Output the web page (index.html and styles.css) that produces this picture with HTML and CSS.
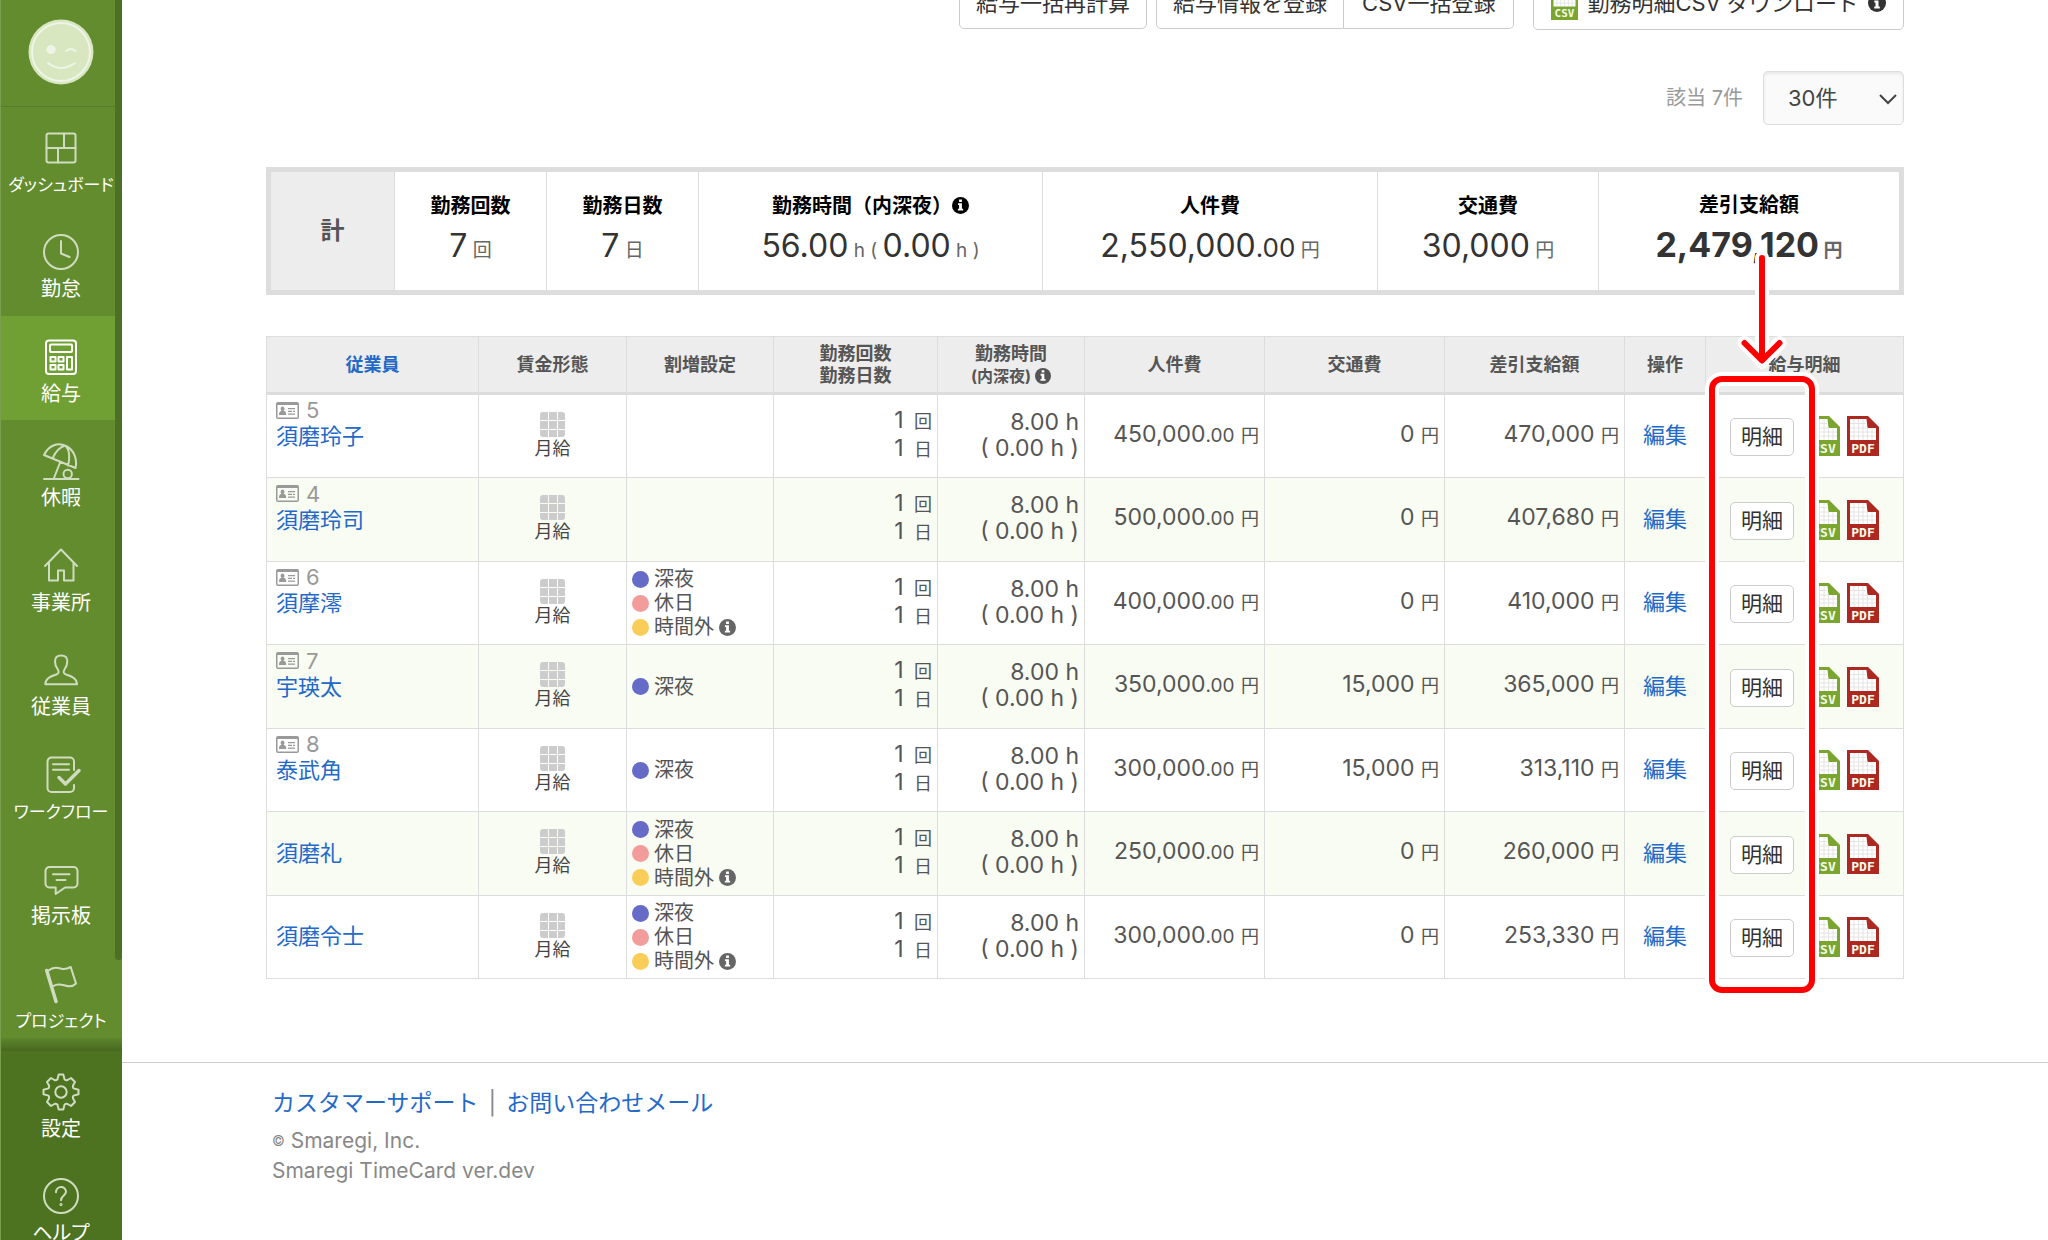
FILE: index.html
```html
<!DOCTYPE html>
<html lang="ja">
<head>
<meta charset="utf-8">
<title>給与 | Smaregi TimeCard</title>
<link rel="stylesheet" href="styles.css">
</head>
<body>
<svg class="sprite" aria-hidden="true">
  <symbol id="info" viewBox="0 0 18 18"><circle cx="9" cy="9" r="9" fill="currentColor"/><path d="M7.5 2.6h3v2.6h-3zM6.3 6.6h4.2v5.8h1.3v2H6.2v-2h1.3V8.6H6.3z" fill="#fff"/></symbol>
  <symbol id="card" viewBox="0 0 23 17"><path d="M2 0h19a2 2 0 0 1 2 2v13a2 2 0 0 1-2 2H2a2 2 0 0 1-2-2V2a2 2 0 0 1 2-2zM1.500 3v12.500h20V3z" fill="currentColor" fill-rule="evenodd"/><path d="M6.500 4.500a2 2.300 0 0 1 1 4.300c2 .5 2.700 1.500 2.700 4.200H3c0-2.700.7-3.700 2.600-4.200a2 2.300 0 0 1 .9-4.300zM12 6h7v1.300h-7zM12 8.700h4V10h-4zM17 8.700h2V10h-2zM12 11.500h7v1.300h-7z" fill="currentColor"/></symbol>
  <symbol id="monthly" viewBox="0 0 25 25"><path d="M3 0h5v8H0V3a3 3 0 0 1 3-3zM9 0h8v8H9zM18 0h4a3 3 0 0 1 3 3v5h-7zM0 9h8v8H0zM9 9h8v8H9zM18 9h7v8h-7zM0 18h8v7H3a3 3 0 0 1-3-3zM9 18h8v7H9zM18 18h7v4a3 3 0 0 1-3 3h-4z" fill="#ccc"/></symbol>
  <symbol id="sheet" viewBox="0 0 32 40"><path d="M0 0h21l11 11v29H0z" fill="currentColor"/><path d="M3 3h16.500l1 9H29v12H3z" fill="#fff"/><path d="M7 3v21M11.500 3v21M16 3v21M20.500 12v12M25 12v12M3 7.500h16M3 12h18M3 16h26M3 20h26" stroke="#e4e4e4" fill="none"/></symbol>
  <symbol id="csv" viewBox="0 0 32 40"><use href="#sheet" width="32" height="40"/><text x="16" y="37" class="file-label">CSV</text></symbol>
  <symbol id="pdf" viewBox="0 0 32 40"><use href="#sheet" width="32" height="40"/><text x="16" y="37" class="file-label">PDF</text></symbol>
</svg>

<aside class="sidebar">
  <a class="avatar" href="#" aria-label="プロフィール">
    <svg viewBox="0 0 66 66" width="66" height="66"><circle cx="33" cy="33" r="32.500" fill="#d9e7c0"/><g fill="none" stroke="#eff4e8" stroke-width="2" stroke-linecap="round"><circle cx="33" cy="33" r="29"/><path d="M38 32q5-4 9.500 0M20 44q13 10 27 0"/></g><circle cx="23" cy="30.500" r="4.600" fill="#eff4e8"/></svg>
  </a>
  <nav class="menu">
    <a class="item kana" href="#"><svg viewBox="0 0 36 36"><rect x="3.500" y="3.500" width="29" height="29" rx="2"/><path d="M3.500 18h29M21 3.500V18M15 18v14.500"/></svg><span>ダッシュボード</span></a>
    <a class="item" href="#"><svg viewBox="0 0 36 36"><circle cx="18" cy="18" r="17"/><path d="M18 7v12.500l8.500 3.500"/></svg><span>勤怠</span></a>
    <a class="item active" href="#"><svg viewBox="0 0 36 36"><rect x="3" y="1.500" width="30" height="33.500" rx="3"/><rect x="7" y="5.500" width="22" height="7.500" rx="1"/><path d="M7.500 18h5v4.500h-5zM15.500 18h5v4.500h-5zM7.500 26h5v4.500h-5zM15.500 26h5v4.500h-5zM24 18h5v12.500h-5z"/></svg><span>給与</span></a>
    <a class="item" href="#"><svg viewBox="0 0 36 36"><path d="M1 12C6 2 15-1 23 3c8 4 11.500 13 9.500 22zM22 2.500c-6 2-10 7-12.500 13M22 2.500c5 4 5 13 3 20M17.300 19 11 35M1 36h34.500"/><circle cx="24.700" cy="31" r="4.200"/></svg><span>休暇</span></a>
    <a class="item" href="#"><svg viewBox="0 0 36 36"><path d="M2 18 18 1.500 34 18M6 14v18.500h9V22.500h6v10h9.500V14"/></svg><span>事業所</span></a>
    <a class="item" href="#"><svg viewBox="0 0 36 36"><path d="M18 3.500c4.500 0 6.500 2 6.300 6 0 4-.8 5.500-2.800 8-1.500 2.500-1 4 1.500 5 4 1.500 11 3 11 9.800H2.300c0-6.800 7-8.300 11-9.800 2.500-1 3-2.500 1.500-5-2-2.500-2.800-4-2.800-8 0-4 1.500-6 6-6z"/></svg><span>従業員</span></a>
    <a class="item kana" href="#"><svg viewBox="0 0 36 36"><path d="M31 13V4.500a4 4 0 0 0-4-4H8.500a4 4 0 0 0-4 4V31a4 4 0 0 0 4 4H27a4 4 0 0 0 4-4v-3M10 7.300h16M10 12.700h16"/><path d="m16 20.500 6.500 6.500L36 13.500" stroke-width="3.500"/></svg><span>ワークフロー</span></a>
    <a class="item" href="#"><svg viewBox="0 0 36 36"><path d="M6.500 6h24a4 4 0 0 1 4 4v12.500a4 4 0 0 1-4 4H22L12.700 33v-6.500H6.500a4 4 0 0 1-4-4V10a4 4 0 0 1 4-4zM10 13.300h16.500M13.500 19h9"/></svg><span>掲示板</span></a>
    <a class="item kana" href="#"><svg viewBox="0 0 36 36"><path d="M3.700 4.500 13 35.500" stroke-width="3.500"/><path d="M5.500 4.500c5-4 9-3 13-1.800 4 1 6 0 9.200-1.700l5.300 16.500c-3 3-6 3.500-10 2.300-4-1-8-3-12.500.2"/></svg><span>プロジェクト</span></a>
  </nav>
  <nav class="menu menu-sub">
    <a class="item" href="#"><svg viewBox="-18 -18 36 36"><path d="M-3.600-12.500-2.300-17.500H2.300L3.600-12.500Q5-11.500 6.600-12L10-14 14-10 12-6.600Q11.500-5 12.500-3.600L17.500-2.300V2.300L12.500 3.600Q11.500 5 12 6.600L14 10 10 14 6.600 12Q5 11.500 3.600 12.500L2.300 17.500H-2.300L-3.600 12.500Q-5 11.500-6.600 12L-10 14-14 10-12 6.600Q-11.500 5-12.500 3.600L-17.500 2.300V-2.300L-12.500-3.600Q-11.500-5-12-6.600L-14-10-10-14-6.600-12Q-5-11.500-3.600-12.500z"/><circle r="5.700"/></svg><span>設定</span></a>
    <a class="item" href="#"><svg viewBox="0 0 36 36"><circle cx="18" cy="18" r="17"/><path d="M13 14.300c0-7 10-7 10-.5 0 3.500-5 4-5 8.500"/><circle cx="18" cy="26.500" r=".6"/></svg><span>ヘルプ</span></a>
  </nav>
  <div class="scroll-thumb"></div>
</aside>

<div class="page">
  <main class="content">
    <div class="toolbar">
      <button class="btn" type="button">給与一括再計算</button>
      <div class="btn-group"><button class="btn" type="button">給与情報を登録</button><button class="btn" type="button">CSV一括登録</button></div>
      <button class="btn btn-download" type="button"><svg class="csv" viewBox="0 0 32 40" width="27" height="34"><use href="#csv"/></svg>勤務明細CSV ダウンロード<svg width="18" height="18"><use href="#info"/></svg></button>
    </div>

    <div class="pager">
      <label for="per-page">該当 7件</label>
      <div class="select"><select id="per-page"><option>30件</option></select><svg viewBox="0 0 18 10" width="18" height="10"><path d="m1 1 8 8 8-8" fill="none" stroke="#444" stroke-width="2"/></svg></div>
    </div>

    <table class="summary">
      <colgroup><col class="s-head"><col class="s-count"><col class="s-count"><col class="s-time"><col class="s-cost"><col class="s-fare"><col class="s-net"></colgroup>
      <tr>
        <th scope="row">計</th>
        <td><h2>勤務回数</h2><p><b>7</b> 回</p></td>
        <td><h2>勤務日数</h2><p><b>7</b> 日</p></td>
        <td><h2>勤務時間（内深夜）<svg width="17" height="17"><use href="#info"/></svg></h2><p><b>56.00</b> h ( <b>0.00</b> h )</p></td>
        <td><h2>人件費</h2><p><b>2,550,000<small>.00</small></b> 円</p></td>
        <td><h2>交通費</h2><p><b>30,000</b> 円</p></td>
        <td class="net"><h2>差引支給額</h2><p><b>2,479,120</b> 円</p></td>
      </tr>
    </table>

    <div class="payroll-wrap">
      <table class="payroll">
        <colgroup><col class="c-name"><col class="c-type"><col class="c-prem"><col class="c-count"><col class="c-time"><col class="c-money"><col class="c-money"><col class="c-money"><col class="c-op"><col class="c-slip"></colgroup>
        <thead>
          <tr><th><a href="#">従業員</a></th><th>賃金形態</th><th>割増設定</th><th>勤務回数<br>勤務日数</th><th>勤務時間<br><small>(内深夜) <svg width="16" height="16"><use href="#info"/></svg></small></th><th>人件費</th><th>交通費</th><th>差引支給額</th><th>操作</th><th>給与明細</th></tr>
        </thead>
        <tbody>
          <tr>
            <td class="name with-id"><span class="id"><svg width="23" height="17"><use href="#card"/></svg>5</span><a href="#">須磨玲子</a></td>
            <td class="type"><svg width="25" height="25"><use href="#monthly"/></svg>月給</td>
            <td></td>
            <td class="num count">1 <i>回</i><br>1 <i>日</i></td>
            <td class="num">8.00 h<br>( 0.00 h )</td>
            <td class="num">450,000<small>.00</small> <i>円</i></td>
            <td class="num">0 <i>円</i></td>
            <td class="num">470,000 <i>円</i></td>
            <td class="op"><a href="#">編集</a></td>
            <td><div class="slip"><button class="btn-slip" type="button">明細</button><a class="csv" href="#" aria-label="CSV"><svg width="32" height="40"><use href="#csv"/></svg></a><a class="pdf" href="#" aria-label="PDF"><svg width="32" height="40"><use href="#pdf"/></svg></a></div></td>
          </tr>
          <tr>
            <td class="name with-id"><span class="id"><svg width="23" height="17"><use href="#card"/></svg>4</span><a href="#">須磨玲司</a></td>
            <td class="type"><svg width="25" height="25"><use href="#monthly"/></svg>月給</td>
            <td></td>
            <td class="num count">1 <i>回</i><br>1 <i>日</i></td>
            <td class="num">8.00 h<br>( 0.00 h )</td>
            <td class="num">500,000<small>.00</small> <i>円</i></td>
            <td class="num">0 <i>円</i></td>
            <td class="num">407,680 <i>円</i></td>
            <td class="op"><a href="#">編集</a></td>
            <td><div class="slip"><button class="btn-slip" type="button">明細</button><a class="csv" href="#" aria-label="CSV"><svg width="32" height="40"><use href="#csv"/></svg></a><a class="pdf" href="#" aria-label="PDF"><svg width="32" height="40"><use href="#pdf"/></svg></a></div></td>
          </tr>
          <tr>
            <td class="name with-id"><span class="id"><svg width="23" height="17"><use href="#card"/></svg>6</span><a href="#">須摩澪</a></td>
            <td class="type"><svg width="25" height="25"><use href="#monthly"/></svg>月給</td>
            <td><ul class="prem"><li class="night">深夜</li><li class="holiday">休日</li><li class="over">時間外<svg width="17" height="17"><use href="#info"/></svg></li></ul></td>
            <td class="num count">1 <i>回</i><br>1 <i>日</i></td>
            <td class="num">8.00 h<br>( 0.00 h )</td>
            <td class="num">400,000<small>.00</small> <i>円</i></td>
            <td class="num">0 <i>円</i></td>
            <td class="num">410,000 <i>円</i></td>
            <td class="op"><a href="#">編集</a></td>
            <td><div class="slip"><button class="btn-slip" type="button">明細</button><a class="csv" href="#" aria-label="CSV"><svg width="32" height="40"><use href="#csv"/></svg></a><a class="pdf" href="#" aria-label="PDF"><svg width="32" height="40"><use href="#pdf"/></svg></a></div></td>
          </tr>
          <tr>
            <td class="name with-id"><span class="id"><svg width="23" height="17"><use href="#card"/></svg>7</span><a href="#">宇瑛太</a></td>
            <td class="type"><svg width="25" height="25"><use href="#monthly"/></svg>月給</td>
            <td><ul class="prem"><li class="night">深夜</li></ul></td>
            <td class="num count">1 <i>回</i><br>1 <i>日</i></td>
            <td class="num">8.00 h<br>( 0.00 h )</td>
            <td class="num">350,000<small>.00</small> <i>円</i></td>
            <td class="num">15,000 <i>円</i></td>
            <td class="num">365,000 <i>円</i></td>
            <td class="op"><a href="#">編集</a></td>
            <td><div class="slip"><button class="btn-slip" type="button">明細</button><a class="csv" href="#" aria-label="CSV"><svg width="32" height="40"><use href="#csv"/></svg></a><a class="pdf" href="#" aria-label="PDF"><svg width="32" height="40"><use href="#pdf"/></svg></a></div></td>
          </tr>
          <tr>
            <td class="name with-id"><span class="id"><svg width="23" height="17"><use href="#card"/></svg>8</span><a href="#">泰武角</a></td>
            <td class="type"><svg width="25" height="25"><use href="#monthly"/></svg>月給</td>
            <td><ul class="prem"><li class="night">深夜</li></ul></td>
            <td class="num count">1 <i>回</i><br>1 <i>日</i></td>
            <td class="num">8.00 h<br>( 0.00 h )</td>
            <td class="num">300,000<small>.00</small> <i>円</i></td>
            <td class="num">15,000 <i>円</i></td>
            <td class="num">313,110 <i>円</i></td>
            <td class="op"><a href="#">編集</a></td>
            <td><div class="slip"><button class="btn-slip" type="button">明細</button><a class="csv" href="#" aria-label="CSV"><svg width="32" height="40"><use href="#csv"/></svg></a><a class="pdf" href="#" aria-label="PDF"><svg width="32" height="40"><use href="#pdf"/></svg></a></div></td>
          </tr>
          <tr>
            <td class="name"><a href="#">須磨礼</a></td>
            <td class="type"><svg width="25" height="25"><use href="#monthly"/></svg>月給</td>
            <td><ul class="prem"><li class="night">深夜</li><li class="holiday">休日</li><li class="over">時間外<svg width="17" height="17"><use href="#info"/></svg></li></ul></td>
            <td class="num count">1 <i>回</i><br>1 <i>日</i></td>
            <td class="num">8.00 h<br>( 0.00 h )</td>
            <td class="num">250,000<small>.00</small> <i>円</i></td>
            <td class="num">0 <i>円</i></td>
            <td class="num">260,000 <i>円</i></td>
            <td class="op"><a href="#">編集</a></td>
            <td><div class="slip"><button class="btn-slip" type="button">明細</button><a class="csv" href="#" aria-label="CSV"><svg width="32" height="40"><use href="#csv"/></svg></a><a class="pdf" href="#" aria-label="PDF"><svg width="32" height="40"><use href="#pdf"/></svg></a></div></td>
          </tr>
          <tr>
            <td class="name"><a href="#">須磨令士</a></td>
            <td class="type"><svg width="25" height="25"><use href="#monthly"/></svg>月給</td>
            <td><ul class="prem"><li class="night">深夜</li><li class="holiday">休日</li><li class="over">時間外<svg width="17" height="17"><use href="#info"/></svg></li></ul></td>
            <td class="num count">1 <i>回</i><br>1 <i>日</i></td>
            <td class="num">8.00 h<br>( 0.00 h )</td>
            <td class="num">300,000<small>.00</small> <i>円</i></td>
            <td class="num">0 <i>円</i></td>
            <td class="num">253,330 <i>円</i></td>
            <td class="op"><a href="#">編集</a></td>
            <td><div class="slip"><button class="btn-slip" type="button">明細</button><a class="csv" href="#" aria-label="CSV"><svg width="32" height="40"><use href="#csv"/></svg></a><a class="pdf" href="#" aria-label="PDF"><svg width="32" height="40"><use href="#pdf"/></svg></a></div></td>
          </tr>
        </tbody>
      </table>
      <!-- callout: arrow and frame round the slip buttons -->
      <svg class="callout" viewBox="0 0 114 748" width="114" height="748" aria-hidden="true">
        <g fill="none" stroke-linecap="round" stroke-linejoin="round">
          <g stroke="#fff" stroke-width="14"><rect x="7" y="129" width="100" height="611" rx="10"/><path d="M57 8v104M39.500 93 57 110.500 74.500 93"/></g>
          <g stroke="#f00" stroke-width="6"><rect x="7" y="129" width="100" height="611" rx="10"/><path d="M57 8v102M39.500 93 57 110.500 74.500 93"/></g>
        </g>
      </svg>
    </div>
  </main>

  <footer class="footer">
    <p class="links"><a href="#">カスタマーサポート</a><span>|</span><a href="#">お問い合わせメール</a></p>
    <p><small>©</small> Smaregi, Inc.</p>
    <p>Smaregi TimeCard ver.dev</p>
  </footer>
</div>
</body>
</html>
```
FILE: styles.css
```css
* { box-sizing: border-box; }

body {
  margin: 0;
  height: 100vh;
  overflow: hidden;
  background: #fff;
  color: #555;
  font: 22px/26px Inter, "Noto Sans CJK JP", sans-serif;
}

h2, p, ul { margin: 0; padding: 0; }
i { font-style: normal; }
a { color: #2369c8; text-decoration: none; }
button, select { font: inherit; }
svg { overflow: visible; }

.sprite { position: absolute; width: 0; height: 0; }
.file-label {
  fill: #f4fbe9;
  font: bold 13px "DejaVu Sans Mono", monospace;
  text-anchor: middle;
}
.csv { color: #7aa52f; }
.pdf { color: #ad2820; }

/* sidebar */
.sidebar {
  position: fixed;
  top: 0;
  bottom: 0;
  left: 0;
  width: 122px;
  overflow: hidden;
  background: #638c2e;
  border-left: 1px solid #7b9e4e;
}
.avatar {
  display: flex;
  height: 107px;
  padding: 19px 0 0 27px;
  border-bottom: 1px solid #547c2b;
}
.menu {
  position: relative;
  padding-bottom: 4px;
}
.menu::after {
  content: "";
  position: absolute;
  inset: auto 0 0;
  height: 13px;
  background: linear-gradient(#5d862d, #47681f);
}
.item {
  display: flex;
  flex-direction: column;
  align-items: center;
  gap: 7px;
  height: 104px;
  padding: 23px 1px 0 0;
  color: #fff;
  font-size: 20px;
  line-height: 24px;
  font-feature-settings: "palt";
  white-space: nowrap;
}
.item.kana { font-size: 17px; }
.item:nth-child(even) { height: 105px; }
.item svg {
  width: 36px;
  height: 36px;
  fill: none;
  stroke: #d0dcc0;
  stroke-width: 2;
  stroke-linecap: round;
  stroke-linejoin: round;
}
.item.active { background: #70a033; }
.item.active svg { stroke: #fff; }
.menu-sub { background: #4d7321; }
.menu-sub::after { display: none; }
.scroll-thumb {
  position: absolute;
  top: 0;
  right: 0;
  width: 7px;
  height: 960px;
  border-radius: 0 0 4px 4px;
  background: #4c7026;
}

/* page */
.page {
  margin-top: -24px;
  padding-left: 122px;
}
.content { padding: 0 144px 83px; }

.toolbar {
  display: flex;
  justify-content: flex-end;
  align-items: center;
  height: 54px;
}
.btn {
  height: 52px;
  padding: 0 16px;
  border: 1px solid #ccc;
  border-radius: 5px;
  background: #fff;
  color: #333;
  white-space: nowrap;
}
.btn-group {
  display: flex;
  margin: 0 19px 0 9px;
}
.btn-group .btn:first-child { border-radius: 5px 0 0 5px; }
.btn-group .btn:last-child {
  padding: 0 18px;
  border-left: 0;
  border-radius: 0 5px 5px 0;
}
.btn-download {
  display: flex;
  align-items: center;
  gap: 9px;
  height: 54px;
  padding: 0 17px;
}

.pager {
  display: flex;
  justify-content: flex-end;
  align-items: center;
  gap: 20px;
  margin: 41px 0 42px;
  color: #999;
  font-size: 20px;
}
.select { position: relative; }
.select select {
  appearance: none;
  display: block;
  width: 141px;
  height: 54px;
  padding: 0 24px;
  border: 1px solid #ddd;
  border-radius: 5px;
  background: #fafafa;
  box-shadow: inset 0 2px 3px #e8e8e8;
  color: #444;
  font-size: 22px;
}
.select svg {
  position: absolute;
  top: 23px;
  right: 7px;
  pointer-events: none;
}

table {
  width: 100%;
  table-layout: fixed;
  border-spacing: 0;
}
th, td { padding: 0; }

/* totals */
.summary {
  margin-bottom: 41px;
  border: 5px solid #ddd;
  color: #666;
}
.s-head { width: 124px; }
.s-count { width: 152px; }
.s-time { width: 344px; }
.s-cost { width: 335px; }
.s-fare { width: 221px; }
.s-net { width: 300px; }
.summary th, .summary td {
  height: 118px;
  border-right: 1px solid #ddd;
  text-align: center;
}
.summary td { padding-top: 4px; }
.summary td:last-child { border-right: 0; }
.summary th {
  background: #ededed;
  color: #555;
  font-size: 24px;
}
.summary h2 {
  display: flex;
  justify-content: center;
  align-items: center;
  color: #000;
  font-size: 20px;
  line-height: 30px;
}
.summary p { font-size: 19px; line-height: 50px; word-spacing: normal; }
.summary b { color: #333; font-size: 32px; font-weight: 400; }
.summary small { font-size: 26px; }
.net p, .net b { font-weight: 700; }
.summary .net b { font-size: 34px; }

/* payroll list */
.payroll-wrap { position: relative; }
.payroll {
  border: solid #ddd;
  border-width: 1px 0 0 1px;
}
.c-name { width: 212px; }
.c-type { width: 148px; }
.c-prem { width: 147px; }
.c-count { width: 164px; }
.c-time { width: 147px; }
.c-money { width: 180px; }
.c-op { width: 81px; }
.c-slip { width: 198px; }
.payroll th, .payroll td {
  border: solid #ddd;
  border-width: 0 1px 1px 0;
}
.payroll th {
  height: 58px;
  border-bottom-width: 3px;
  background: #ededed;
  font-size: 18px;
  line-height: 22px;
}
.payroll th small { font-size: 16px; }
.payroll th svg { vertical-align: -2px; }
.payroll td { height: 83px; }
.payroll tbody tr:nth-child(even) { background: #f9fcf2; }
.payroll tbody tr:nth-child(even) td { height: 84px; }
.payroll .name { padding: 0 0 2px 9px; }
.payroll .with-id { padding-bottom: 26px; }
.id {
  display: flex;
  align-items: center;
  gap: 7px;
  color: #999;
}
.id + a { display: block; }
.type {
  color: #444;
  font-size: 18px;
  line-height: 24px;
  text-align: center;
}
.type svg { display: block; margin: 0 auto; }
.prem {
  padding-left: 5px;
  list-style: none;
  font-size: 20px;
  line-height: 24px;
}
.prem li {
  display: flex;
  align-items: center;
  gap: 5px;
}
.prem li::before {
  content: "";
  width: 17px;
  height: 17px;
  border-radius: 50%;
}
.prem svg { color: #666; }
.night::before { background: #666bc8; }
.holiday::before { background: #f39c9c; }
.over::before { background: #facc58; }
.payroll .num {
  padding: 0 5px 3px 0;
  font-size: 23px;
  text-align: right;
}
.num small { font-size: 19px; }
.num i { font-size: 18px; }
.count i { margin-left: 4px; }
.payroll .op { padding-bottom: 2px; text-align: center; }
.slip {
  display: flex;
  justify-content: center;
}
.slip a, .slip svg { display: block; }
.slip .csv { margin: 0 7px 0 14px; }
.btn-slip {
  width: 64px;
  height: 38px;
  margin-top: 2px;
  padding: 0;
  border: 1px solid #ccc;
  border-radius: 5px;
  background: #fff;
  color: #333;
  font-size: 21px;
}
.callout {
  position: absolute;
  top: -86px;
  right: 85px;
  pointer-events: none;
}

/* footer */
.footer {
  padding: 25px 150px 40px;
  border-top: 1px solid #ccc;
  color: #888;
  font-size: 21px;
  line-height: 30px;
}
.footer .links {
  display: flex;
  gap: 10px;
  margin-bottom: 8px;
  font-size: 23px;
}
.footer small { font-size: 14px; vertical-align: 2px; }
```
